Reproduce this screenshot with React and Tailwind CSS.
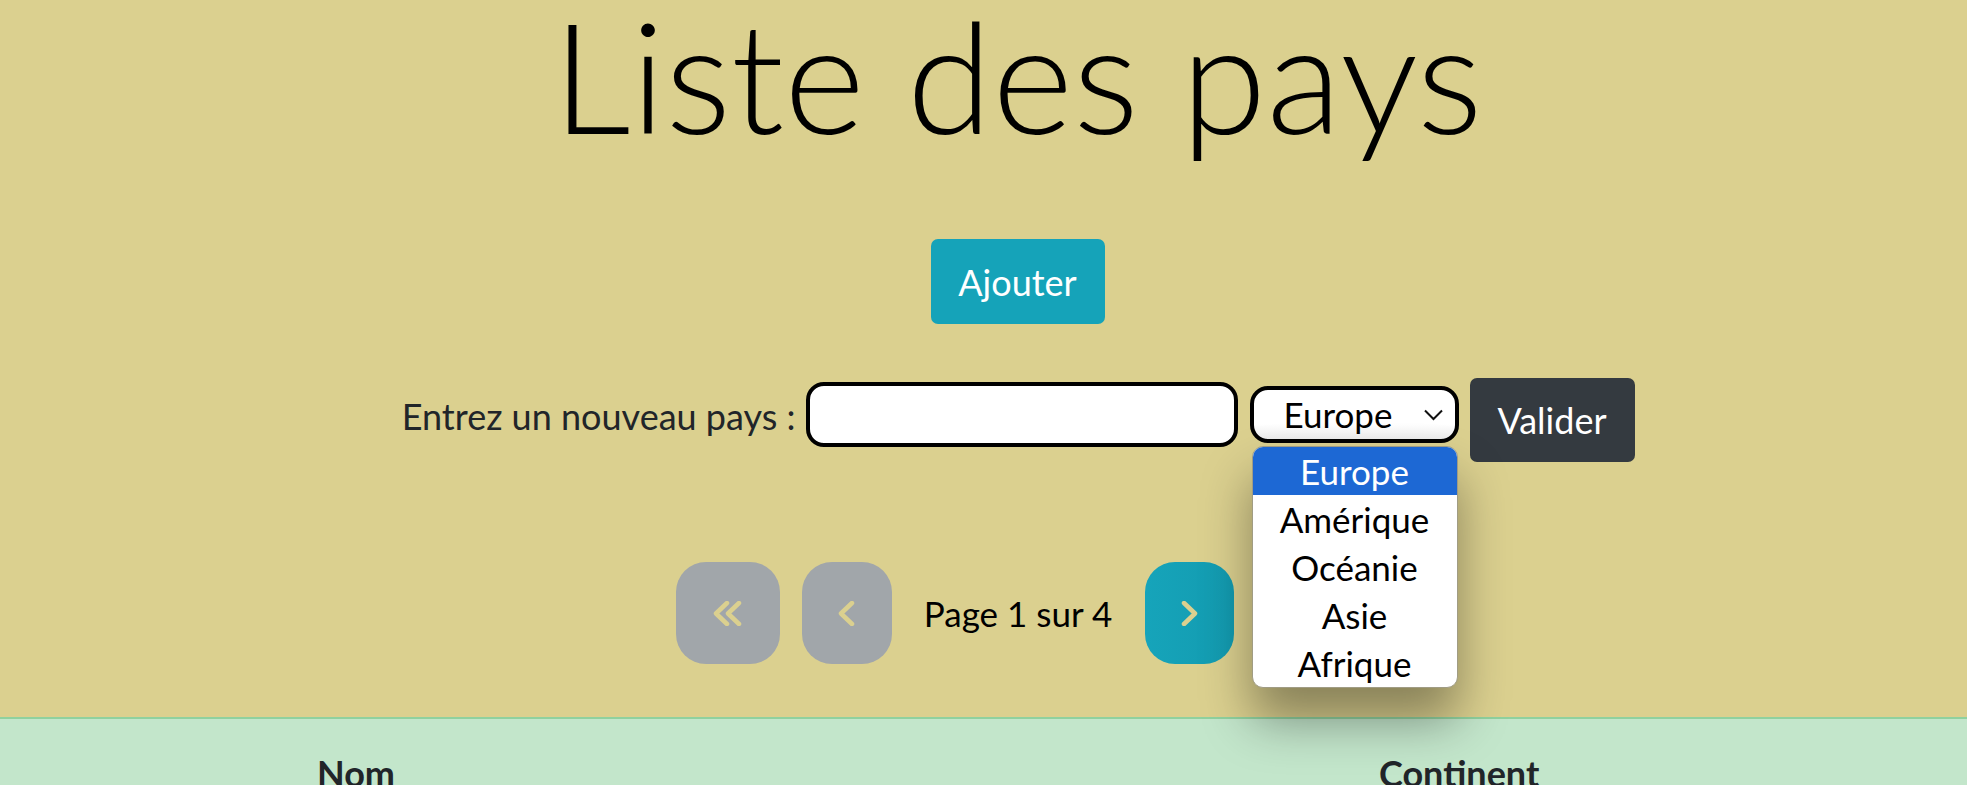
import { useState } from "react";

const continents = ["Europe", "Amérique", "Océanie", "Asie", "Afrique"];

function Chevron({ dir = "left", double = false }) {
  // rounded chevrons drawn with strokes, like the pager icons
  const one = dir === "left" ? "M14 2 L3 12.5 L14 23" : "M3 2 L14 12.5 L3 23";
  return (
    <svg
      width={double ? 29 : 17}
      height="25"
      viewBox={double ? "0 0 29 25" : "0 0 17 25"}
      fill="none"
      stroke="#dbd08f"
      strokeWidth="4.5"
      strokeLinecap="round"
      strokeLinejoin="round"
    >
      <path d={one} />
      {double && <path d={one} transform="translate(12 0)" />}
    </svg>
  );
}

export default function App() {
  const [selected] = useState("Europe");

  return (
    <div className="min-h-screen bg-[#dbd08f] font-['Lato',sans-serif] text-[#212529]">
      <div className="flex flex-col items-center pl-[68px]">
        <h1 className="mt-[9px] whitespace-nowrap text-[155px] font-light leading-[130px] text-black">
          Liste des pays
        </h1>

        <button className="mt-[100px] flex h-[85px] w-[174px] items-center justify-center rounded-[7px] bg-[#15a3b9] text-[36px] text-white">
          Ajouter
        </button>

        {/* formulaire */}
        <div className="relative z-10 mt-[54px] flex items-start">
          <label className="mt-[11px] w-[395px] whitespace-nowrap text-right text-[36px] leading-[54px]">
            Entrez un nouveau pays :
          </label>
          <input
            type="text"
            className="ml-[10px] mt-[4px] h-[65px] w-[432px] rounded-[18px] border-4 border-black bg-white px-3 text-[36px] outline-none"
          />
          <div className="relative ml-[12px] mt-[8px]">
            <div className="flex h-[57px] w-[209px] items-center rounded-[18px] border-4 border-black bg-gradient-to-b from-white from-70% to-[#ececec] pl-[30px] pr-[12px] text-[35px] leading-none text-black">
              <span className="flex-1">{selected}</span>
              <svg width="19" height="12" viewBox="0 0 19 12" fill="none" stroke="#111" strokeWidth="2">
                <path d="M1 1.5 L9.5 10 L18 1.5" />
              </svg>
            </div>
            <ul className="absolute left-[2px] top-[60px] w-[206px] overflow-hidden rounded-[11px] border border-[#a09c84] bg-white text-center text-[35px] text-black shadow-[0_32px_50px_rgba(0,0,0,0.38)]">
              {continents.map((c) => (
                <li
                  key={c}
                  className={
                    c === selected
                      ? "h-[48px] bg-[#1d68d4] leading-[48px] text-white"
                      : "h-[48px] leading-[48px]"
                  }
                >
                  {c}
                </li>
              ))}
            </ul>
          </div>
          <button className="ml-[11px] flex h-[84px] w-[165px] items-center justify-center rounded-[7px] bg-[#343a40] text-[36px] text-white">
            Valider
          </button>
        </div>

        {/* pagination */}
        <div className="mt-[100px] flex items-center">
          <button className="flex h-[102px] w-[104px] items-center justify-center rounded-[30px] bg-[#a1a6aa]">
            <Chevron dir="left" double />
          </button>
          <button className="ml-[22px] flex h-[102px] w-[90px] items-center justify-center rounded-[30px] bg-[#a1a6aa]">
            <Chevron dir="left" />
          </button>
          <span className="ml-[31px] w-[191px] whitespace-nowrap text-center text-[35px] text-black">
            Page 1 sur 4
          </span>
          <button className="ml-[31px] flex h-[102px] w-[89px] items-center justify-center rounded-[30px] bg-gradient-to-r from-[#16a4ba] to-[#139bb0]">
            <Chevron dir="right" />
          </button>
          <button className="ml-[22px] flex h-[102px] w-[104px] items-center justify-center rounded-[30px] bg-[#15a3b9]">
            <Chevron dir="right" double />
          </button>
        </div>
      </div>

      {/* tableau */}
      <div className="mt-[53px] border-t-2 border-[#8fd19e] bg-[#c3e6cb]">
        <div className="grid grid-cols-[1379px_1fr] py-[27px] text-[36px] font-bold leading-[54px] text-[#212529]">
          <div className="pl-[317px]">Nom</div>
          <div>Continent</div>
        </div>
      </div>
    </div>
  );
}
